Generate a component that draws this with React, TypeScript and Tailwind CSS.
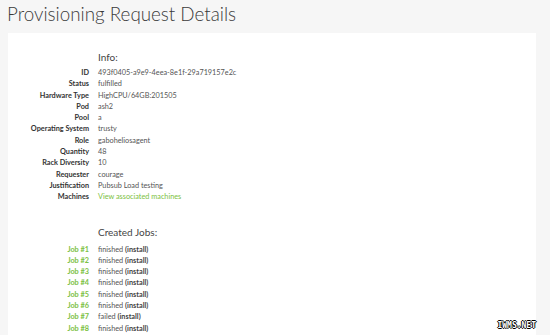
const info: [string, string][] = [
  ["ID", "493f0405-a9e9-4eea-8e1f-29a719157e2c"],
  ["Status", "fulfilled"],
  ["Hardware Type", "HighCPU/64GB:201505"],
  ["Pod", "ash2"],
  ["Pool", "a"],
  ["Operating System", "trusty"],
  ["Role", "gaboheliosagent"],
  ["Quantity", "48"],
  ["Rack Diversity", "10"],
  ["Requester", "courage"],
  ["Justification", "Pubsub Load testing"],
];

const jobs = [
  "finished",
  "finished",
  "finished",
  "finished",
  "finished",
  "finished",
  "failed",
  "finished",
];

export default function App() {
  return (
    <div className="h-[335px] w-[550px] overflow-hidden bg-[#f6f6f6] font-['Lato',sans-serif] relative">
      <h1 className="pl-[7px] pt-[2px] h-[33px] text-[18.8px] font-light text-[#3a3a3a] leading-[24px]">
        Provisioning Request Details
      </h1>
      <div className="ml-[8px] w-[528px] h-[310px] bg-white pt-[17px]">
        <div className="pl-[90px] text-[10px] text-[#444] leading-[14px] mb-[3px]">Info:</div>
        <div className="text-[7.3px] leading-[11.3px]">
          {info.map(([k, v]) => (
            <div key={k} className="flex">
              <div className="w-[81px] text-right font-bold text-[#333]">{k}</div>
              <div className="ml-[9px] text-[#555]">{v}</div>
            </div>
          ))}
          <div className="flex">
            <div className="w-[81px] text-right font-bold text-[#333]">Machines</div>
            <div className="ml-[9px] text-[#7cc142]">View associated machines</div>
          </div>
        </div>

        <div className="pl-[90px] mt-[22px] text-[10px] text-[#444] leading-[14px] mb-[5px]">
          Created Jobs:
        </div>
        <div className="text-[7.3px] leading-[11.3px]">
          {jobs.map((s, i) => (
            <div key={i} className="flex">
              <div className="w-[81px] text-right font-bold text-[#7cc142]">Job #{i + 1}</div>
              <div className="ml-[9px] text-[#555]">
                {s} <span className="font-bold text-[#444]">(install)</span>
              </div>
            </div>
          ))}
        </div>
      </div>
      <div className="absolute right-[14px] bottom-[5px] text-[8px] font-bold font-['DejaVu_Sans_Mono',monospace] text-white leading-none [text-shadow:1px_0_0_#000,-1px_0_0_#000,0_1px_0_#000,0_-1px_0_#000]">
        IWMS.NET
      </div>
    </div>
  );
}
